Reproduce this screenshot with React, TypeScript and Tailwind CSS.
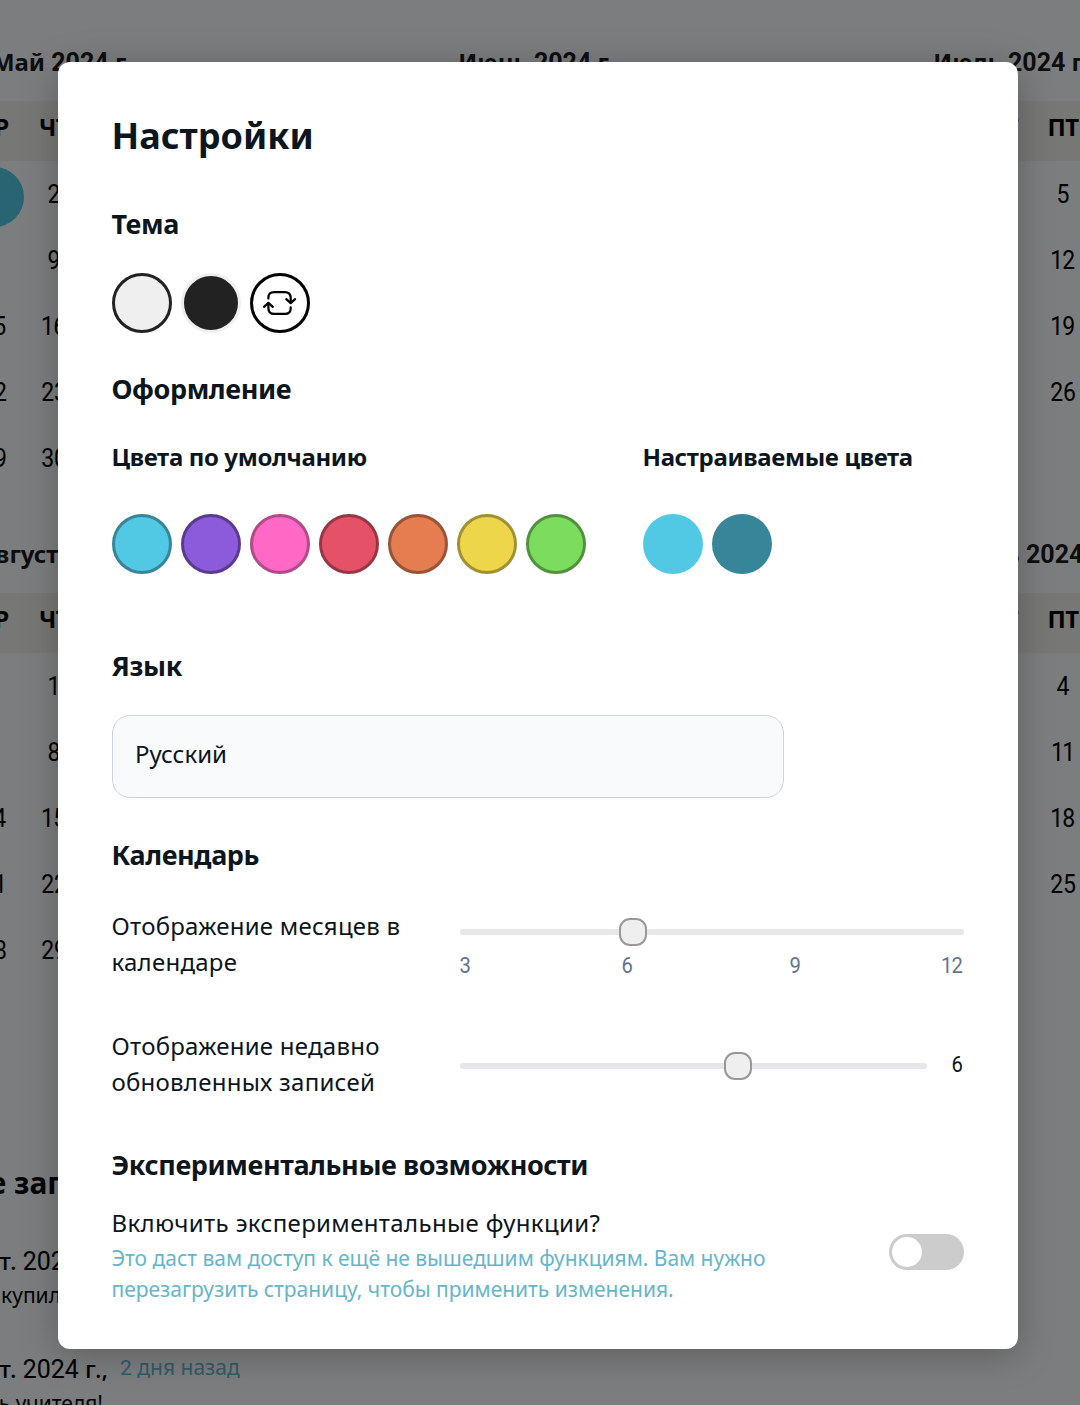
import React from "react";

const weekdays = ["ПН", "ВТ", "СР", "ЧТ", "ПТ", "СБ", "ВС"];

type MonthData = { name: string; offset: number; days: number; marked?: number };

const monthRows: MonthData[][] = [
  [
    { name: "Май 2024 г.", offset: 2, days: 31, marked: 1 },
    { name: "Июнь 2024 г.", offset: 5, days: 30 },
    { name: "Июль 2024 г.", offset: 0, days: 31 },
  ],
  [
    { name: "Август 2024 г.", offset: 3, days: 31 },
    { name: "Сентябрь 2024 г.", offset: 6, days: 30 },
    { name: "Октябрь 2024 г.", offset: 1, days: 31 },
  ],
];

/** Sets the numerals of a string in the numeral face. */
function Num({ children, className = "" }: { children: string; className?: string }) {
  return (
    <>
      {children.split(/(\d+)/).map((part, i) =>
        /^\d+$/.test(part) ? (
          <span key={i} className={"font-[Roboto,sans-serif] " + className}>
            {part}
          </span>
        ) : (
          part
        ),
      )}
    </>
  );
}

/** A slightly condensed number; the figure 1 is set narrower than the others. */
function Figures({ value, className = "" }: { value: number; className?: string }) {
  return (
    <span className={"inline-block scale-x-[0.92] font-[Roboto,sans-serif] " + className}>
      {String(value)
        .split("")
        .map((d, i) => (
          <span key={i} className={d === "1" ? "-mx-px" : ""}>
            {d}
          </span>
        ))}
    </span>
  );
}

function Month({ name, offset, days, marked }: MonthData) {
  return (
    <section className="w-[420px] shrink-0">
      <h3 className="flex h-[78px] items-center justify-center pt-[2px] pl-4 text-2xl font-bold whitespace-pre text-[#1c1c1c]">
        <span>
          <Num className="text-[25px]">{name}</Num>
        </span>
      </h3>
      <div className="grid h-[60px] grid-cols-7 bg-[#efeeed] pt-2 text-center text-2xl leading-9 font-bold tracking-[-0.6px]">
        {weekdays.map((d) => (
          <span key={d}>{d}</span>
        ))}
      </div>
      <div className="grid grid-cols-7 text-center text-2xl">
        {Array.from({ length: offset }, (_, i) => (
          <span key={"e" + i} />
        ))}
        {Array.from({ length: days }, (_, i) => (
          <span
            key={i}
            className={
              i + 1 === marked
                ? "mt-1.5 h-[60px] rounded-full bg-[#51c9e5] leading-[54px]"
                : "mt-1.5 h-[60px] leading-[54px]"
            }
          >
            <Figures value={i + 1} className="text-[25px]" />
          </span>
        ))}
      </div>
    </section>
  );
}

function Entry({ date, ago, text, width }: { date: string; ago: string; text: string; width: string }) {
  return (
    <li className="h-[108px]">
      <div className="flex items-baseline gap-3 leading-9">
        <span className="flex w-[308px] shrink-0 justify-end text-2xl font-medium whitespace-nowrap">
          <span>
            <Num className="text-[25px] font-normal">{date}</Num>
          </span>
        </span>
        <span className="-translate-y-[3px] text-[21px] whitespace-nowrap text-[#66b5cb]">
          <Num>{ago}</Num>
        </span>
      </div>
      <p className={"-mt-[2px] flex justify-end text-[21px] leading-8 whitespace-nowrap " + width}>{text}</p>
    </li>
  );
}

function Background() {
  return (
    <div className="h-full w-full overflow-hidden bg-[#f8fafc] text-black">
      <div className="-ml-[156px] flex w-[1369px] flex-col pt-[23px]">
        {monthRows.map((row, i) => (
          <div key={i} className="flex h-[492px] gap-[54.5px]">
            {row.map((m) => (
              <Month key={m.name} {...m} />
            ))}
          </div>
        ))}
      </div>
      <div className="-ml-[200px] pt-[152px]">
        <h2 className="flex w-[323px] justify-end text-[30px] leading-[48px] font-bold whitespace-nowrap text-[#0a0d12]">
          Последние записи
        </h2>
        <ul className="pt-[37px]">
          <Entry date="31 окт. 2024 г.," ago="1 день назад" text="Сегодня я купил" width="w-[261px]" />
          <Entry date="30 окт. 2024 г.," ago="2 дня назад" text="День учителя!" width="w-[303px]" />
        </ul>
      </div>
    </div>
  );
}

function Swatch({ className }: { className: string }) {
  return <button className={"size-[60px] shrink-0 rounded-full " + className} />;
}

function Slider({ fill, label }: { fill: string; label: string }) {
  return (
    <div className="relative h-1.5 grow rounded-full bg-[#e5e7eb]" role="slider" aria-label={label}>
      <span
        className={
          "absolute -top-[11px] size-7 rounded-[11px] border-2 border-[#999] bg-[#efefef] " + fill
        }
      />
    </div>
  );
}

function SectionTitle({ children, className }: { children: string; className: string }) {
  return <h2 className={"text-[27px] leading-[41px] font-bold tracking-[-0.4px] " + className}>{children}</h2>;
}

const defaultColors = [
  "border-3 bg-[#51c9e5] border-[#378599]",
  "border-3 bg-[#8b5bdb] border-[#5a3b8f]",
  "border-3 bg-[#ff69c5] border-[#b34a8a]",
  "border-3 bg-[#e55167] border-[#993645]",
  "border-3 bg-[#e57d51] border-[#995336]",
  "border-3 bg-[#edd64a] border-[#a19132]",
  "border-3 bg-[#7cdc5e] border-[#52913e]",
];

function SettingsModal() {
  return (
    <div className="h-[1287px] w-[960px] rounded-xl bg-white pr-[54px] pl-[53.5px] pt-[55px] text-[#0d151d] shadow-[0_6px_36px_rgba(0,0,0,0.25)]">
      <h1 className="text-4xl leading-[37px] font-bold">Настройки</h1>

      <SectionTitle className="mt-[49px]">Тема</SectionTitle>
      <div className="mt-[29px] flex gap-[9px] pl-[0.5px]">
        <Swatch className="border-3 border-[#222] bg-[#efefef]" />
        <Swatch className="border-3 border-[#efefef] bg-[#222]" />
        <button className="flex size-[60px] items-center justify-center rounded-full border-3 border-black">
          <svg
            width="36"
            height="36"
            viewBox="0.4 0 36 36"
            fill="none"
            stroke="black"
            strokeWidth="2.25"
            strokeLinecap="round"
            strokeLinejoin="round"
          >
            <path d="M6.8 13.6V12.6C6.8 9 8.6 7.1 12.6 7.1H23.2C27.3 7.1 29.1 9.1 29.1 12.9V17.6" />
            <path d="M24.7 14.2L29.1 18.1L33.5 14.2" />
            <path d="M29.1 22.4V23.4C29.1 27 27.3 28.9 23.2 28.9H12.6C8.6 28.9 6.8 27 6.8 23.2V18.4" />
            <path d="M2.4 21.8L6.8 17.9L11.2 21.8" />
          </svg>
        </button>
      </div>

      <SectionTitle className="mt-[35px]">Оформление</SectionTitle>
      <div className="mt-[30px] flex">
        <div className="w-[531px]">
          <h3 className="text-2xl leading-9 font-bold tracking-[-0.36px]">Цвета по умолчанию</h3>
          <div className="mt-[39px] flex gap-[9px] pl-[0.5px]">
            {defaultColors.map((c) => (
              <Swatch key={c} className={c} />
            ))}
          </div>
        </div>
        <div>
          <h3 className="text-2xl leading-9 font-bold tracking-[-0.34px]">Настраиваемые цвета</h3>
          <div className="mt-[39px] flex gap-[9px] pl-[0.5px]">
            <Swatch className="bg-[#51c9e5]" />
            <Swatch className="bg-[#378599]" />
          </div>
        </div>
      </div>

      <SectionTitle className="mt-[71px]">Язык</SectionTitle>
      <div className="mt-[29px] ml-[0.5px] h-[83px] w-[672px] rounded-[18px] border border-[#cbd5e1] bg-[#f8fafc] px-[22px] pt-5 text-2xl leading-9">
        Русский
      </div>

      <SectionTitle className="mt-9">Календарь</SectionTitle>
      <div className="mt-[33px] flex h-[72px]">
        <div className="w-[348.5px] pr-10 text-2xl leading-9 tracking-[0.25px]">Отображение месяцев в календаре</div>
        <div className="grow pt-[21px]">
          <Slider label="Месяцы" fill="left-[159px]" />
          <div className="mt-[14px] flex text-[22px] leading-[33px] text-[#64748b]">
            <Figures value={3} className="-ml-px w-[13px]" />
            <Figures value={6} className="ml-[149px] w-[13px]" />
            <Figures value={9} className="ml-[155px] w-[13px]" />
            <Figures value={12} className="ml-auto" />
          </div>
        </div>
      </div>
      <div className="mt-12 flex h-[72px]">
        <div className="w-[348.5px] pr-10 text-2xl leading-9 tracking-[0.25px]">
          Отображение недавно обновленных записей
        </div>
        <div className="flex h-[75px] grow items-center">
          <Slider label="Записи" fill="left-[264px]" />
          <span className="w-[37px] pr-px pb-1 text-right text-[22px]">
            <Figures value={6} />
          </span>
        </div>
      </div>

      <SectionTitle className="mt-11">Экспериментальные возможности</SectionTitle>
      <div className="mt-5 flex justify-between">
        <div className="w-[690px]">
          <div className="text-2xl leading-9 tracking-[0.36px]">Включить экспериментальные функции?</div>
          <p className="mt-0.5 text-[21px] leading-[31px] tracking-[-0.02px] text-[#66b5cb]">
            Это даст вам доступ к ещё не вышедшим функциям. Вам нужно перезагрузить страницу, чтобы применить
            изменения.
          </p>
        </div>
        <button className="mt-[29px] flex h-9 w-[75px] rounded-full bg-[#ccc] p-[3px]">
          <span className="size-[30px] rounded-full bg-white" />
        </button>
      </div>
    </div>
  );
}

export default function App() {
  return (
    <div className="relative h-[1405px] w-[1080px] overflow-hidden font-['Noto_Sans',sans-serif]">
      <Background />
      <div className="absolute inset-0 flex items-start bg-black/50 pt-[62px] pl-[58px]">
        <SettingsModal />
      </div>
    </div>
  );
}
